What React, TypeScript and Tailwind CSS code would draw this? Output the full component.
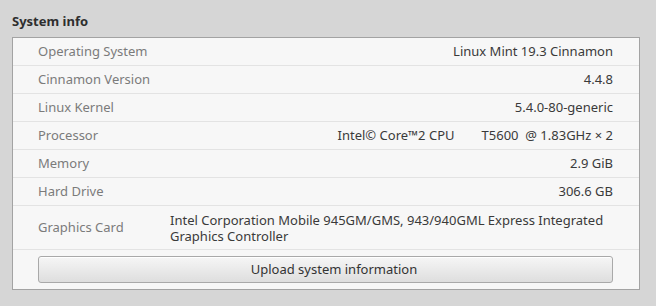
import React from "react";

const rows: [string, string][] = [
  ["Operating System", "Linux Mint 19.3 Cinnamon"],
  ["Cinnamon Version", "4.4.8"],
  ["Linux Kernel", "5.4.0-80-generic"],
  ["Processor", "Intel\u00A9 Core\u21222 CPU        T5600  @ 1.83GHz \u00D7 2"],
  ["Memory", "2.9 GiB"],
  ["Hard Drive", "306.6 GB"],
];

export default function App() {
  return (
    <div
      className="w-[656px] h-[306px] bg-[#d6d6d6] pt-[13px] px-[12px]"
      style={{ fontFamily: '"Noto Sans", "DejaVu Sans", sans-serif' }}
    >
      <div className="h-[24px] text-[13px] font-bold text-[#2e2e2e] leading-[16px]">System info</div>
      <div className="w-[628px] border border-[#a3a3a3] bg-[#f7f7f7] text-[13px]">
        {rows.map(([k, v]) => (
          <div key={k} className="flex items-center h-[28px] border-b border-[#e3e3e3] pl-[25px] pr-[26px]">
            <div className="w-[132px] shrink-0 text-[#7b7b7b]">{k}</div>
            <div className="flex-1 text-right text-[#3a3a3a] whitespace-pre">{v}</div>
          </div>
        ))}
        <div className="flex items-center h-[44px] border-b border-[#e3e3e3] pl-[25px] pr-[26px]">
          <div className="w-[132px] shrink-0 text-[#7b7b7b]">Graphics Card</div>
          <div className="flex-1 text-left text-[#3a3a3a] leading-[16px]">
            Intel Corporation Mobile 945GM/GMS, 943/940GML Express Integrated Graphics Controller
          </div>
        </div>
        <div className="pt-[6px] pb-[6px] pl-[25px] pr-[26px]">
          <div className="h-[27px] rounded-[3px] border border-[#a9a9a9] bg-gradient-to-b from-[#f6f6f6] to-[#dedede] flex items-center justify-center pl-[17px] text-[#333333] shadow-[inset_0_1px_0_#ffffff]">
            Upload system information
          </div>
        </div>
      </div>
    </div>
  );
}
